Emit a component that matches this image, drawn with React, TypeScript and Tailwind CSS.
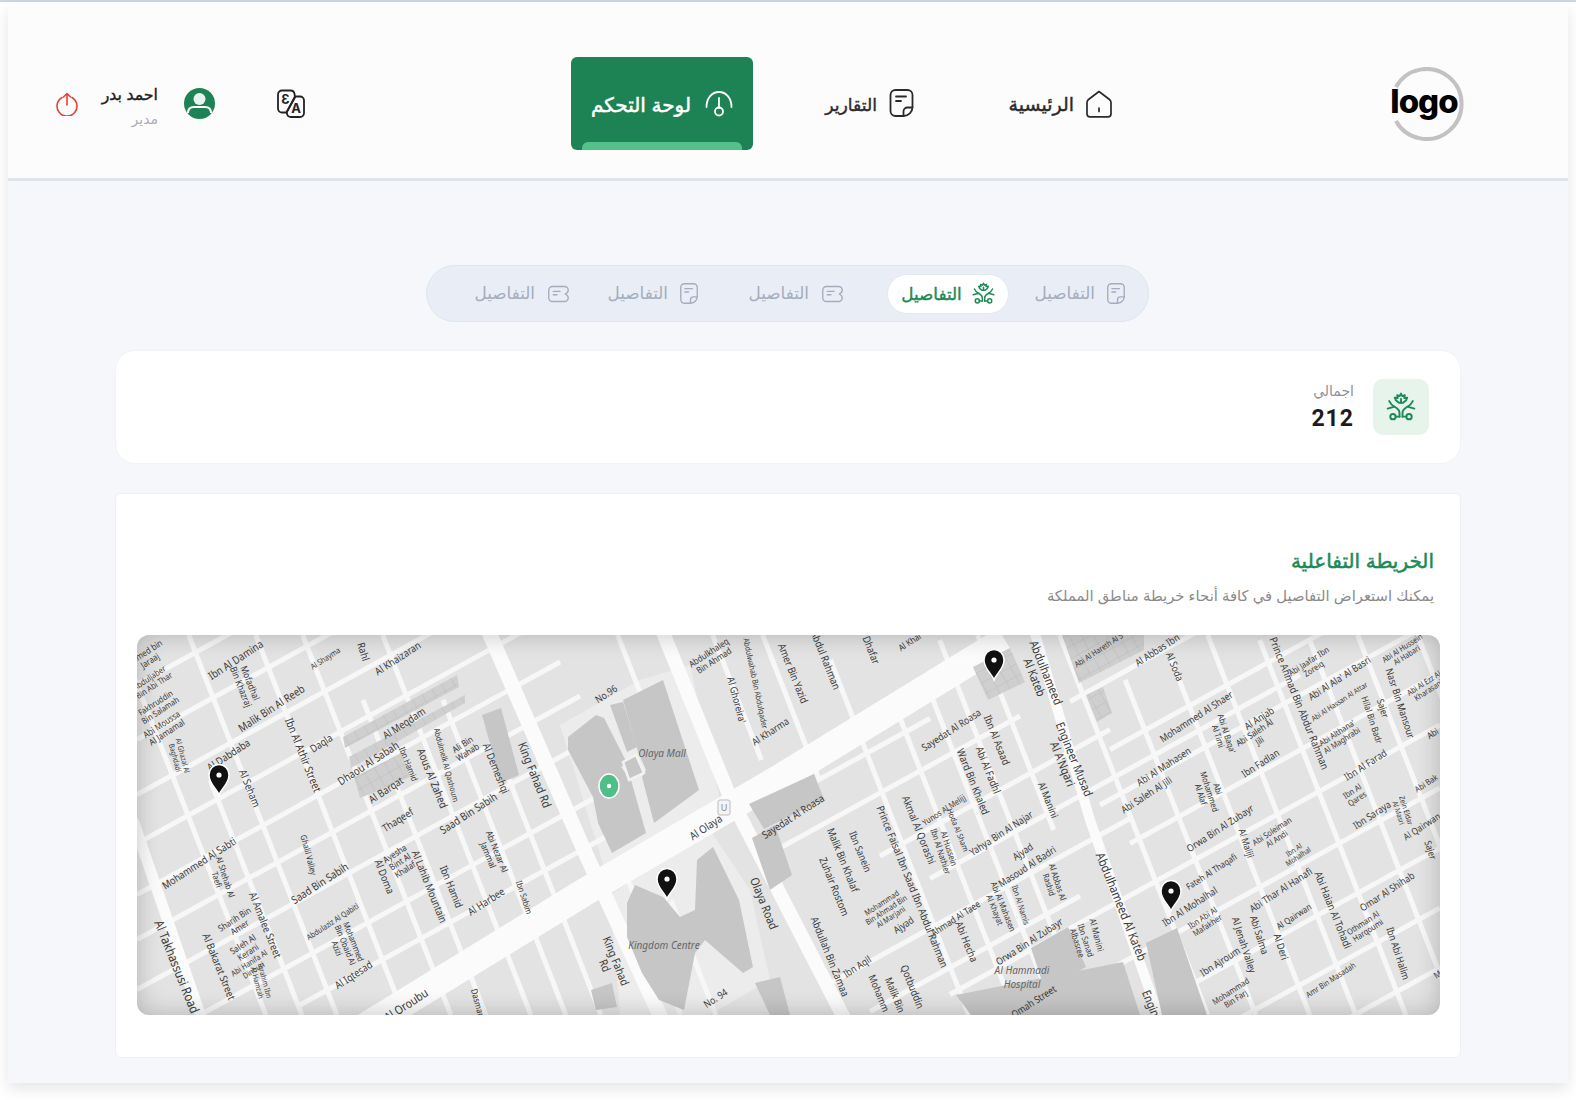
import React from "react";

type L = [number, number, number, string, number, number?];
const z5 = (x: number, y: number) => [120 + x / 2.376 - 137, 620 + y / 3 - 635];
const z6 = (x: number, y: number) => [780 + x / 2.306 - 137, 620 + y / 3 - 635];

const L5: L[] = [
  [275,120,-33,"Ibn Al Damina",11],[298,195,68,"Mofadhal\nBin Khazraj",9.5],[360,265,-33,"Malik Bin Al Reeb",11],[488,115,-33,"Al Shayma",8],
  [660,115,-33,"Al Khaizaran",10.5],[578,95,72,"Rahl",10.5],[435,405,70,"Ibn Al Athir Street",11],[478,370,-33,"Daqla",10.5],
  [675,310,-33,"Al Meqdam",10.5],[590,430,-33,"Dhaou Al Sabah",11],[685,432,70,"Ibn Hamid",8.5],[742,475,70,"Aous Al Zahed",11],
  [775,435,75,"Abdulmelk Al Qashoum",8],[820,385,-33,"Ali Bin\nWahab",9],[893,445,70,"Al Demeshqi",10.5],[632,510,-33,"Al Barqat",10.5],
  [660,600,-33,"Thaqeef",10.5],[828,580,-33,"Saad Bin Sabih",11],[985,465,68,"King Fahad Rd",12],[1155,222,-33,"No.96",10],
  [1405,110,-33,"Abdulkhaleq\nBin Ahmad",9],[1465,240,75,"Al Ghoreira'",10],[1510,190,78,"Abdulwahab Bin Abdulqader",8],[1545,335,-33,"Al Kharma",10],
  [258,405,-33,"Al Dabdaba",10.5],[308,505,70,"Al Seham",10.5],[188,730,-33,"Mohammed Al Sabti",10.5],[240,775,72,"Al Shehab Al\nTaefi",8.5],
  [448,705,75,"Ghalil Valley",8.5],[475,790,-33,"Saad Bin Sabih",11],[885,700,70,"Abi Nezar Al\nJammal",9],[628,770,70,"Al Doma",10.5],
  [665,725,-33,"Ayesha\nBint Al\nKhalaf",9],[735,800,70,"Al Lahib Mountain",10.5],[787,800,70,"Ibn Hamid",10.5],[870,845,-33,"Al Harbee",10.5],
  [960,832,72,"Ibn Sabim",8.5],[345,915,70,"Al Amalee Street",10.5],[135,1040,70,"Al Takhassusi Road",13],[235,1040,70,"Al Bakarat Street",10.5],
  [278,910,-33,"Sharih Bin\nAmer",9],[298,985,-33,"Saleh Al\nKerani",9],[312,1040,-33,"Abi Hanifa Al\nDinouri",8],[505,905,-33,"Abdulaziz Al Qabiti",8],
  [535,975,70,"Mohammed\nBin Obaid Al\nAzizi",8.5],[555,1065,-33,"Al Iqtesad",10.5],[680,1155,-33,"Al Oroubu",12],[850,1150,75,"Dasman",9],
  [1165,1030,68,"King Fahad\nRd",11.5],[1415,1135,-33,"No. 94",10],[1530,850,68,"Olaya Road",12],[1392,622,-33,"Al Olaya",11],
  [65,110,-33,"Ahmed bin\nJaraaj",9],[75,185,-33,"Abduljaber\nBin Abi Thar",8.5],[90,260,-33,"Fakhruddin\nBin Salamah",8.5],[105,325,-33,"Abi Moussa\nAl Jamamal",9],
  [140,410,75,"Al Ghazal Al\nBaghdadi",7.5],[335,1085,75,"Ibrahim Ibn\nAl Hamzah",7.5],
];
const L6: L[] = [
  [30,160,70,"Amer Bin Yazid",10.5],[105,120,70,"Abdul Rahman",10.5],[210,90,70,"Dhafar",10.5],[300,65,-33,"Al Khar",9],[600,165,70,"Abdulhameed\nAl Kateb",12],
  [30,590,-33,"Sayedat Al Roasa",10.5],[395,330,-33,"Sayedat Al Roasa",10],[500,360,70,"Ibn Al Asaad",10.5],[480,450,70,"Abi Al Fadhl",10.5],[445,485,70,"Ward Bin Khaled",10.5],
  [618,540,70,"Al Manini",10],[665,425,70,"Engineer Musad\nAl A'Nqari",12],[378,570,-33,"Yunos Al Melijj",8.5],[410,630,70,"Hoda Al Sham",8],[380,690,72,"Al Hussein\nIbn Al Nathier",8.5],
  [510,640,-33,"Yahya Bin Al Najar",10],[560,695,-33,"Ajyad",10],[570,740,-33,"Masoud Al Badri",10],[630,790,72,"Al Abbas Al\nRashid",8.5],[505,865,70,"Abi Al Mahasen\nAl Khayat",8.5],
  [555,855,72,"Ibn Al Namis",8],[405,895,-33,"Ahmad Al Taee",9.5],[430,965,70,"Abi Hecha",10.5],[575,965,-33,"Orwa Bin Al Zubayr",10],[695,965,72,"Ibn Sanad\nAlbasree",8.5],
  [730,945,75,"Al Manini",9],[320,630,70,"Akmal Al Qorashi",10.5],[305,800,70,"Prince Faisal Ibn Saad Ibn Abdul Rahman",10.5],[145,720,70,"Malik Bin Khalaf",10.5],[125,800,70,"Zuhair Rostom",10.5],
  [185,695,70,"Ibn Sanein",10],[115,1010,70,"Abdullah Bin Zamaa",10.5],[245,870,-33,"Mohammad\nBin Ahmad Bin\nAl Marjani",8],[285,915,-33,"Ajyad",10],[178,1040,-33,"Ibn Aqil",10],
  [305,1100,70,"Qotbuddin",10.5],[265,1125,70,"Malik Bin",10],[228,1120,70,"Mohamm",10],[585,1145,-33,"Omah Street",10],[787,860,70,"Abdulhameed Al Kateb",12.5],
  [855,1150,70,"Engin",12],[870,90,-33,"Al Abbas Ibn",10],[910,140,70,"Al Soda",10],[735,90,-33,"Abi Al Hareth Al S",8],[1197,250,70,"Prince Ahmad Bin Abdur Rahman",10.5],
  [960,290,-33,"Mohammed Al Shaer",10],[1225,135,-33,"Abi Jaafar Ibn\nZoreiq",8.5],[1290,175,-33,"Abi Al Ala' Al Basri",10],[1290,245,-33,"Abi Al Hassan Al Attar",7.5],[1020,345,72,"Abi Al Baqa'\nAl Timi",8.5],
  [1105,295,-33,"Al Anjab",10],[1100,350,-33,"Abi Saleh Al\nJili",9],[1108,430,-33,"Ibn Fadlan",10],[885,440,-33,"Abi Al Mahasen",10],[845,525,-33,"Abi Saleh Al Jili",10],
  [990,515,72,"Abi\nMohammed\nAl Alaf",8.5],[1015,625,-33,"Orwa Bin Al Zubayr",10],[1075,670,72,"Al Maliji",9.5],[1140,645,-33,"Abi Soleiman\nAl Andi",8.5],[1190,700,-33,"Ibn Al\nMohalhal",7.5],
  [995,755,-33,"Fateh Al Thaqafi",9],[945,860,-33,"Ibn Al Mohalhal",10],[980,905,-33,"Ibn Abi Al\nMafakher",8.5],[1070,975,72,"Al Jenah Valley",10],[1015,1025,-33,"Ibn Ajroum",10],
  [1045,1125,-33,"Mohammad\nBin Farj",8.5],[1155,810,-33,"Abi Thar Al Hanafi",10],[1185,890,-33,"Al Qairwan",9],[1105,945,72,"Abi Salma",10],[1155,980,72,"Al Deri",10],
  [1275,870,70,"Abi Haian Al Tohadi",10.5],[1270,1080,-33,"Amr Bin Masadah",8],[1400,815,-33,"Omar Al Shihab",10],[1350,920,-33,"Othman Al\nHarqoumi",8.5],[1425,1000,72,"Ibn Abi Halim",10],
  [1290,350,-33,"Abi Althana'\nAl Maghrabi",8.5],[1365,300,72,"Hilal Bin Badr",9],[1350,435,-33,"Ibn Al Farad",10],[1325,525,-33,"Ibn Al\nQares",8.5],[1365,585,-33,"Ibn Saraya",10],
  [1435,575,72,"Zein Eldar\nAl Masri",7.5],[1480,620,-33,"Al Qairwan",9.5],[1500,690,72,"Sajer",9.5],[1390,265,72,"Sajer",9.5],[1430,250,72,"Nasr Bin Mansour",10],
  [1440,95,-33,"Abi Al Hussein\nAl Habari",8],[1490,200,-33,"Abi Al Ezz Al\nKharasani",8],[1505,340,-33,"Abi",9],[1490,490,-33,"Abi Bak",8.5],[1520,1060,-33,"Ma",9],
];

const A: [number, number, number][] = [
  [760,137,380],[815,137,440],[870,137,500],[919,137,560],[970,137,560],[1015,137,580],[1065,137,600],[1125,200,600],[1170,300,620],
  [1277,760,1020],[1290,1070,1300],[1340,880,1110],[1360,1110,1440],[1390,930,1300],[1410,1100,1440],[1440,830,1130],[1465,1130,1440],
  [1517,950,1440],[1580,1060,1440],[1640,1150,1440],[1700,1210,1440],[1760,1290,1440],[1230,760,930],[1490,870,1080],
];
const B: [number, number, number][] = [
  [-130,635,1015],[-94,780,1015],[-59,635,1015],[8,635,1015],[55,635,1015],[90,700,1015],[135,635,1015],[170,700,1015],[205,720,1015],
  [285,860,1015],[320,900,1015],[370,635,780],[465,635,760],[515,635,780],[573,660,1015],[620,700,1015],[660,690,1015],[690,640,1015],[730,635,830],
  [812,635,1015],[860,680,1015],[914,660,1015],[960,635,1015],[1010,640,1015],[1060,640,1015],[1110,635,1015],[1170,635,1015],[1220,700,1015],
];
const poly = (s: string) =>
  s.trim().split(/\s+/).map((p) => { const [x, y] = p.split(",").map(Number); return `${x - 137},${y - 635}`; }).join(" ");

const BLD = [
  "568,737 596,715 604,718 627,763 621,767 631,780 646,833 612,853 598,823 593,797 568,750",
  "623,700 663,680 699,790 654,823 642,777 646,770 638,752",
  "610,705 623,702 637,747 627,752",
  "627,903 635,885 663,897 680,917 695,910 697,860 713,847 739,900 753,967 743,973 705,940 695,953 684,1010 659,1000 642,973 627,937",
  "749,804 814,774 824,799 764,829","752,838 775,825 792,875 770,890",
  "482,715 501,708 519,775 501,783","1031,948 1068,927 1086,967 1045,990","956,995 1123,962 1140,1015 971,1015",
  "1146,943 1177,928 1207,1015 1162,1015","591,990 612,983 617,1007 596,1010","755,983 780,977 790,1015 770,1015",
];
const HATCH = [
  "343,737 457,675 459,687 345,748","349,757 465,695 465,703 351,768","354,777 402,753 410,777 360,798",
  "973,667 1010,648 1025,682 988,700","1062,635 1144,635 1144,650 1079,683","1086,695 1103,687 1112,713 1097,722",
];

function Label({ l, f }: { l: L; f: typeof z5 }) {
  const [x, y] = f(l[0], l[1]);
  const lines = l[3].split("\n");
  const lh = l[4] * 1.05;
  return (
    <text transform={`translate(${x} ${y}) rotate(${l[2] === 70 ? 68 : l[2]}) scale(0.86 1)`} fontSize={l[4]} textAnchor="middle" fill="#3a3a3a" fontFamily="'Noto Sans',sans-serif" direction="ltr">
      {lines.map((t, k) => (
        <tspan key={k} x={0} y={(k - (lines.length - 1) / 2) * lh + l[4] * 0.35}>{t}</tspan>
      ))}
    </text>
  );
}

function Pin({ x, y }: { x: number; y: number }) {
  return (
    <g transform={`translate(${x - 137} ${y - 635})`}>
      <path d="M0 0C-2-6-10-11-10-20a10 10.500 0 0 1 20 0C10-11 2-6 0 0Z" fill="#111" stroke="#fff" strokeWidth="1.5" />
      <circle cx="0" cy="-20" r="2.600" fill="#fff" />
    </g>
  );
}

function MapView() {
  return (
    <div className="relative h-[380px] w-full overflow-hidden rounded-xl bg-[#e3e3e3]">
      <svg viewBox="0 0 1303 380" width="1303" height="380" className="block h-full w-full" direction="ltr">
        <defs>
          <pattern id="hatch" width="11" height="11" patternUnits="userSpaceOnUse" patternTransform="rotate(-29)">
            <rect width="11" height="11" fill="#cfcfcf" />
            <path d="M0 0H11M0 0V11" stroke="#bdbdbd" strokeWidth="1" />
          </pattern>
        </defs>
        <rect width="1303" height="380" fill="#e3e3e3" />
        <polygon points={poly("560,725 640,680 690,665 720,800 640,860 605,870")} fill="#ececec" />
        <polygon points={poly("610,895 710,830 750,890 770,980 700,1020 620,1015")} fill="#ececec" />
        <g stroke="#f7f7f7" strokeWidth="5" fill="none">
          {A.map(([c, a, b], i) => (
            <line key={i} x1={a - 137} y1={c - 0.55 * a - 635} x2={b - 137} y2={c - 0.55 * b - 635} />
          ))}
          {B.map(([d, a, b], i) => (
            <line key={i} x1={d + 0.39 * a - 137} y1={a - 635} x2={d + 0.39 * b - 137} y2={b - 635} />
          ))}
        </g>
        <g stroke="#fbfbfb" fill="none">
          <polyline points={poly("360,1030 583,893 780,778 1005,640")} strokeWidth="28" />
          <polyline points={poly("488,630 584,850 662,1020")} strokeWidth="15" />
          <polyline points={poly("662,630 730,797 845,1020")} strokeWidth="14" />
          <polyline points={poly("1034,630 1090,820 1160,1020")} strokeWidth="10" />
          <polyline points={poly("133,820 202,1020")} strokeWidth="11" />
        </g>
        {BLD.map((b, i) => <polygon key={i} points={poly(b)} fill="#c6c6c6" />)}
        {HATCH.map((b, i) => <polygon key={i} points={poly(b)} fill="url(#hatch)" />)}
        <polygon points={poly("623,762 636,755 644,773 629,780")} fill="#c6c6c6" stroke="#f2f2f2" strokeWidth="2.500" />
        {L5.map((l, i) => <Label key={"a" + i} l={l} f={z5} />)}
        {L6.map((l, i) => <Label key={"b" + i} l={l} f={z6} />)}
        <text x="525" y="122" fontSize="10" fontStyle="italic" fill="#666" textAnchor="middle" fontFamily="'Noto Sans',sans-serif">Olaya Mall</text>
        <text x="527" y="314" fontSize="10" fontStyle="italic" fill="#666" textAnchor="middle" fontFamily="'Noto Sans',sans-serif">Kingdom Centre</text>
        <text x="885" y="339" fontSize="10" fontStyle="italic" fill="#666" textAnchor="middle" fontFamily="'Noto Sans',sans-serif">Al Hammadi</text>
        <text x="885" y="353" fontSize="10" fontStyle="italic" fill="#666" textAnchor="middle" fontFamily="'Noto Sans',sans-serif">Hospital</text>
        <rect x="581" y="165" width="12" height="15" rx="2" fill="#f4f4f4" stroke="#bbb" />
        <text x="587" y="176" fontSize="9" fill="#888" textAnchor="middle" fontFamily="'Noto Sans',sans-serif">U</text>
        <Pin x={219} y={795} />
        <Pin x={667} y={899} />
        <Pin x={994} y={680} />
        <Pin x={1171} y={911} />
        <g transform="translate(472 151)">
          <ellipse rx="10" ry="12" fill="#4fbf87" stroke="#fff" strokeWidth="1.500" />
          <circle r="2.200" fill="#fff" />
        </g>
      </svg>
      <div className="absolute inset-0 rounded-xl shadow-[inset_0_0_24px_rgba(0,0,0,0.22)]" />
    </div>
  );
}

const Leaf = ({ className }: { className: string }) => (
  <svg viewBox="0 0 28 28" fill="none" stroke="currentColor" strokeWidth="1.800" strokeLinecap="round" strokeLinejoin="round" className={className}>
    <path d="M14 1.500l1.200 2.300 2.300-.9-.4 2.700 2.700-.3-1 2.400L16 10h-4L9.200 7.700l-1-2.400 2.700.3-.4-2.700 2.300.9z" />
    <path d="M14 6.500V10" />
    <path d="M12.600 23v-3.500c0-3.500-2.500-4.500-5-6C5.500 12.200 4 10.500 3 8.500" />
    <path d="M15.400 23v-3.500c0-3.500 2.500-4.500 5-6 2.100-1.300 3.600-3 4.600-5" />
    <path d="M1.500 15.500l6.500-1.800M26.500 15.500L20 13.700" />
    <circle cx="6.500" cy="23" r="2.500" />
    <circle cx="21.500" cy="23" r="2.500" />
    <path d="M9 23h3.600M15.400 23H19" />
  </svg>
);

const Note = ({ className }: { className: string }) => (
  <svg viewBox="0 0 24 28" fill="none" stroke="currentColor" strokeWidth="1.800" strokeLinecap="round" strokeLinejoin="round" className={className}>
    <path d="M14 27H6a5 5 0 0 1-5-5V6a5 5 0 0 1 5-5h12a5 5 0 0 1 5 5v12c0 5-4 9-9 9Z" />
    <path d="M23 18.500h-5a4 4 0 0 0-4 4V27" />
    <path d="M6.500 7.500h10M6.500 12h5" />
  </svg>
);

const Scroll = ({ className }: { className: string }) => (
  <svg viewBox="0 0 28 22" fill="none" stroke="currentColor" strokeWidth="1.800" strokeLinecap="round" strokeLinejoin="round" className={className}>
    <path d="M6 1h16a5 5 0 0 1 5 5c0 2.500-2 4-4 5 2 1 4 2.500 4 5a5 5 0 0 1-5 5H6a5 5 0 0 1-5-5V6a5 5 0 0 1 5-5Z" />
    <path d="M7 7.500h9M7 12h5" />
  </svg>
);

function Tab({ w, mr, active, children }: { w: string; mr: string; active?: boolean; children: React.ReactNode }) {
  return (
    <div className={`flex items-center ${w} ${mr} ${active ? "h-10 justify-center rounded-full border border-[#e3e9f2] bg-white text-[#1d8a55] [-webkit-text-stroke:0.4px_currentColor]" : "text-[#a4adbd]"}`}>
      {children}
    </div>
  );
}

export default function App() {
  return (
    <div dir="rtl" className="min-h-[1100px] bg-white font-['Inter','DejaVu_Sans',sans-serif]">
      <div className="h-[2px] bg-[#cfd5e3]" />
      <div className="mx-2 h-[1081px] bg-[#f6f7fb] shadow-[0_6px_14px_rgba(0,0,0,0.10)]">
        <header className="flex h-[179px] items-center border-b-[3px] border-[#dfe3ea] bg-[#fcfcfd] pt-[27px] pr-[104px]">
          <svg viewBox="0 0 74 74" className="h-[74px] w-[74px] shrink-0" direction="ltr">
            <path d="M6 20A35 35 0 1 1 6 54" fill="none" stroke="#c2c2c2" strokeWidth="4" />
            <text x="34" y="46" fontSize="33" fontWeight="800" textAnchor="middle" fill="#000" fontFamily="Inter,sans-serif" letterSpacing="-1">logo</text>
          </svg>
          <nav className="mr-[277px] flex items-center">
            <a className="flex w-[105px] items-center gap-[11px] text-[19px] text-[#2a2a2a] [-webkit-text-stroke:0.4px_currentColor]">
              <svg viewBox="0 0 28 28" fill="none" stroke="#2a2a2a" strokeWidth="1.700" strokeLinejoin="round" className="h-7 w-7 shrink-0">
                <path d="M14 1.500 24.500 9.500c1 .8 1.500 1.500 1.500 3v11.500c0 1.800-1 2.800-3 2.800H5c-2 0-3-1-3-2.800V12.500c0-1.500.5-2.200 1.500-3Z" />
                <path d="M14 18v3.500" strokeLinecap="round" />
              </svg>
              <span className="mt-[3px] whitespace-nowrap">الرئيسية</span>
            </a>
            <a className="mr-[94px] flex w-[91px] items-center gap-[12px] text-[17.2px] text-[#2a2a2a] [-webkit-text-stroke:0.4px_currentColor]">
              <Note className="h-7 w-[25px] shrink-0" />
              <span className="mt-[3px] whitespace-nowrap">التقارير</span>
            </a>
            <a className="relative mr-[70px] flex h-[93px] w-[182px] items-center justify-center gap-[14px] overflow-hidden rounded-md bg-[#1d8354] text-[20px] text-white [-webkit-text-stroke:0.5px_currentColor]">
              <svg viewBox="0 0 28 28" fill="none" stroke="#fff" strokeWidth="1.800" strokeLinecap="round" className="h-7 w-7 shrink-0">
                <path d="M1.500 17C1.500 8 7 2 14 2s12.500 6 12.500 15" />
                <path d="M14 8v10" />
                <circle cx="14" cy="21.500" r="4" />
              </svg>
              <span className="mt-[3px] whitespace-nowrap">لوحة التحكم</span>
              <div className="absolute inset-x-[11px] bottom-0 h-2 rounded-t-md bg-[#54c08a]" />
            </a>
          </nav>
          <svg viewBox="0 0 30 30" fill="none" stroke="#222" strokeWidth="1.800" className="mr-[265px] h-[30px] w-[30px] shrink-0" direction="ltr">
            <path d="M6 1.500h8.500a4 4 0 0 1 4 3.500L19 7.500 10.500 23.500H6a4 4 0 0 1-4-4V5.500a4 4 0 0 1 4-4Z" />
            <path d="M19.500 7.500h4.500a4 4 0 0 1 4 4V24a4 4 0 0 1-4 4H15a4 4 0 0 1-4-3.500l-.5-1Z" />
            <text x="9.500" y="15" fontSize="13" fill="#222" stroke="none" fontWeight="700" textAnchor="middle" fontFamily="Inter,sans-serif">Ɛ</text>
            <text x="20" y="24" fontSize="13" fill="#222" stroke="none" fontWeight="700" textAnchor="middle" fontFamily="Inter,sans-serif">A</text>
          </svg>
          <svg viewBox="0 0 31 31" className="mr-[61px] h-[31px] w-[31px] shrink-0">
            <circle cx="15.500" cy="15.500" r="15.500" fill="#1d8354" />
            <circle cx="15.500" cy="11" r="6" fill="#fff" fillOpacity="0.9" />
            <path d="M4 25c0-5 3-6 6-6h11c3 0 6 1 6 6" fill="none" stroke="#fff" strokeWidth="2" />
          </svg>
          <div className="mr-[26px] flex w-[56px] flex-col gap-2 pt-[6px]">
            <span className="whitespace-nowrap text-[15.8px] leading-4 text-[#222] [-webkit-text-stroke:0.4px_currentColor]">احمد بدر</span>
            <span className="text-[14px] leading-4 text-[#a9adb8]">مدير</span>
          </div>
          <svg viewBox="0 0 22 24" fill="none" stroke="#e5433a" strokeWidth="1.600" strokeLinecap="round" strokeLinejoin="round" className="mr-6 h-6 w-[22px] shrink-0">
            <path d="M6 5.500a10 10 0 1 0 10 0" />
            <path d="M11 13V1.500M7.500 5 11 1.500 14.500 5" />
          </svg>
        </header>

        <main className="px-[107px] pt-[84px]">
          <div className="mr-[312px] flex h-[57px] w-[723px] items-center rounded-full border border-[#dde6f1] bg-[#e8edf6] pr-[23px] text-[16.8px]">
            <Tab w="w-[93px]" mr="mr-0"><Note className="ml-[12px] h-[21px] w-[18px] shrink-0" /><span className="whitespace-nowrap pt-[1px]">التفاصيل</span></Tab>
            <Tab w="w-[122px]" mr="mr-[23px]" active><Leaf className="ml-[10px] h-[23px] w-[23px] shrink-0" /><span className="whitespace-nowrap pt-[3px]">التفاصيل</span></Tab>
            <Tab w="w-[94px]" mr="mr-[44px]"><Scroll className="ml-[13px] h-[18px] w-[21px] shrink-0" /><span className="whitespace-nowrap pt-[1px]">التفاصيل</span></Tab>
            <Tab w="w-[92px]" mr="mr-[51px]"><Note className="ml-[12px] h-[21px] w-[18px] shrink-0" /><span className="whitespace-nowrap pt-[1px]">التفاصيل</span></Tab>
            <Tab w="w-[94px]" mr="mr-[37px]"><Scroll className="ml-[13px] h-[18px] w-[21px] shrink-0" /><span className="whitespace-nowrap pt-[1px]">التفاصيل</span></Tab>
          </div>

          <section className="mt-[28px] flex h-[114px] items-center gap-[19px] rounded-[20px] border border-[#f1f3f8] bg-white pr-[31px]">
            <div className="flex h-14 w-14 items-center justify-center rounded-[10px] bg-[#e6f4ec] text-[#1d8a55]">
              <Leaf className="h-[30px] w-[30px]" />
            </div>
            <div className="flex flex-col gap-1">
              <span className="text-[14px] leading-5 text-[#8d919c]">اجمالي</span>
              <span className="font-['Roboto',sans-serif] text-[23px] leading-7 font-bold tracking-[1px] text-[#1c1c1c]">212</span>
            </div>
          </section>

          <section className="mt-[29px] h-[565px] rounded-md border border-[#edf0f6] bg-white pt-[53px] pr-[20px] pl-[21px]">
            <h2 className="pr-[6px] text-[20px] leading-7 text-[#1d8a55] [-webkit-text-stroke:0.5px_currentColor]">الخريطة التفاعلية</h2>
            <p className="mt-[11px] pr-[6px] text-[14.8px] leading-5 text-[#8a8a8a]">يمكنك استعراض التفاصيل في كافة أنحاء خريطة مناطق المملكة</p>
            <div className="mt-[29px]"><MapView /></div>
          </section>
        </main>
      </div>
    </div>
  );
}
